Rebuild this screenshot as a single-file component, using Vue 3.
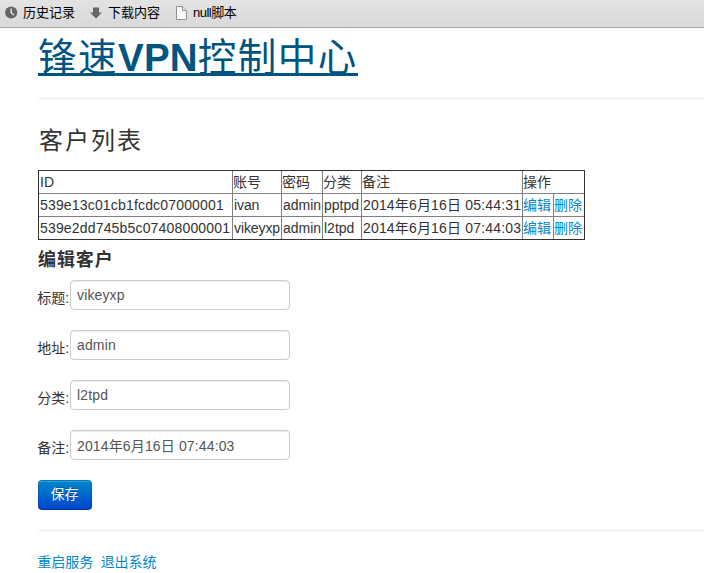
<script setup>
import { reactive } from 'vue'

const clients = [
  { id: '539e13c01cb1fcdc07000001', name: 'ivan', pass: 'admin', type: 'pptpd', note: '2014年6月16日 05:44:31' },
  { id: '539e2dd745b5c07408000001', name: 'vikeyxp', pass: 'admin', type: 'l2tpd', note: '2014年6月16日 07:44:03' },
]

const fields = reactive([
  { key: 'title', label: '标题:', value: 'vikeyxp' },
  { key: 'address', label: '地址:', value: 'admin' },
  { key: 'type', label: '分类:', value: 'l2tpd' },
  { key: 'note', label: '备注:', value: '2014年6月16日 07:44:03' },
])
</script>

<template>
  <div class="page">
    <nav class="bookmarks">
      <a class="bookmark history">
        <svg width="13" height="13" viewBox="0 0 13 13">
          <circle cx="6.2" cy="6.5" r="6.1" fill="#666" />
          <path d="M6.2 2.5V6.8L8.7 9" fill="none" stroke="#e8e8e8" stroke-width="1.4" />
        </svg>
        <span>历史记录</span>
      </a>
      <a class="bookmark downloads">
        <svg width="12" height="12" viewBox="0 0 12 12">
          <path d="M3 .5h6v5H12L6 11.5 0 5.5h3z" fill="#666" />
        </svg>
        <span>下载内容</span>
      </a>
      <a class="bookmark script">
        <svg width="11" height="14" viewBox="0 0 11 14">
          <path d="M.5 .5H6.5L10.5 4.5V13.5H.5z" fill="#fafafa" stroke="#929292" />
          <path d="M6.5 .5V4.5H10.5" fill="#e8e8e8" stroke="#929292" />
        </svg>
        <span>null脚本</span>
      </a>
    </nav>

    <main class="content">
      <h1><a><span class="cjk">锋速</span><b>VPN</b><span class="cjk">控制中心</span></a></h1>
      <hr>
      <h2>客户列表</h2>

      <table>
        <colgroup>
          <col class="c-id"><col class="c-name"><col class="c-pass"><col class="c-type">
          <col class="c-note"><col class="c-edit"><col class="c-del">
        </colgroup>
        <tbody>
          <tr class="head">
            <td>ID</td><td>账号</td><td>密码</td><td>分类</td><td>备注</td><td colspan="2">操作</td>
          </tr>
          <tr v-for="c in clients" :key="c.id">
            <td class="wide">{{ c.id }}</td>
            <td class="name">{{ c.name }}</td>
            <td>{{ c.pass }}</td>
            <td>{{ c.type }}</td>
            <td class="wide">{{ c.note }}</td>
            <td class="action"><a>编辑</a></td>
            <td class="action"><a>删除</a></td>
          </tr>
        </tbody>
      </table>

      <h3>编辑客户</h3>
      <form @submit.prevent>
        <div v-for="f in fields" :key="f.key" class="field">
          <label :for="f.key">{{ f.label }}</label>
          <input :id="f.key" v-model="f.value" type="text">
        </div>
        <button type="submit">保存</button>
      </form>
      <hr class="bottom">
      <footer><a>重启服务</a><a>退出系统</a></footer>
    </main>
  </div>
</template>

<style>
body {
  margin: 0;
  background: #fff;
  overflow: hidden;
}
</style>

<style scoped>
.page {
  height: 573px;
  overflow: hidden;
  font: 14px/20px "Liberation Sans", "Noto Sans CJK SC", sans-serif;
  color: #333;
}
.bookmarks {
  box-sizing: border-box;
  height: 28px;
  padding: 0 0 2px 5px;
  display: flex;
  align-items: center;
  background: linear-gradient(#e3e3e3, #d9d9d9);
  border-bottom: 1px solid #a9a9a9;
  font-size: 13px;
  color: #000;
}
.bookmark {
  display: flex;
  align-items: center;
  white-space: nowrap;
}
.history { width: 85px; gap: 5px; }
.downloads { width: 86px; gap: 6px; }
.script { gap: 6px; letter-spacing: -0.5px; }
.content {
  padding-left: 38px;
}
h1, h2, h3 {
  margin: 0;
  white-space: nowrap;
}
h1 {
  height: 70px;
  line-height: 60px;
  font-size: 38.5px;
  font-weight: 400;
  color: #005580;
}
h1 a {
  display: inline-block;
  height: 45px;
  border-bottom: 3px solid #005580;
}
h1 .cjk { letter-spacing: 1.5px; }
h1 b { letter-spacing: 0.2px; }
hr {
  margin: 0;
  border: 0;
  border-top: 1px solid #eee;
}
h2 {
  height: 71px;
  padding-left: 1px;
  line-height: 83px;
  font-size: 24px;
  font-weight: 400;
  letter-spacing: 2px;
}
table {
  width: 547px;
  height: 70px;
  table-layout: fixed;
  border: 1px solid #333;
  border-spacing: 0;
}
td {
  box-sizing: border-box;
  height: 23px;
  padding: 0 0 0 1px;
  border-right: 1px solid #808080;
  border-bottom: 1px solid #808080;
  white-space: nowrap;
}
td.wide { letter-spacing: 0.17px; }
td.name { letter-spacing: -0.1px; }
.head td + td,
td.action { padding-left: 0; }
td:last-child { border-right: 0; }
tr:last-child td { height: 22px; border-bottom: 0; }
.c-id { width: 194px; }
.c-name { width: 49px; }
.c-pass { width: 41px; }
.c-type { width: 39px; }
.c-note { width: 161px; }
.c-edit { width: 31px; }
.c-del { width: 30px; }
a { cursor: pointer; }
td a, footer a { color: #0088cc; }
h3 {
  height: 40px;
  line-height: 41px;
  font-size: 18px;
  font-weight: 700;
  letter-spacing: 0.9px;
}
.field {
  display: flex;
  height: 50px;
}
label {
  width: 32px;
  padding-top: 8px;
  text-indent: -0.7px;
}
input {
  box-sizing: border-box;
  width: 220px;
  height: 30px;
  padding: 4px 6px;
  font: inherit;
  letter-spacing: 0.14px;
  color: #555;
  background: #fff;
  border: 1px solid #ccc;
  border-radius: 4px;
  box-shadow: inset 0 1px 1px rgba(0, 0, 0, 0.075);
}
button {
  display: block;
  box-sizing: border-box;
  width: 54px;
  height: 30px;
  padding: 0 1px 2px 0;
  font: inherit;
  color: #fff;
  text-shadow: 0 -1px 0 rgba(0, 0, 0, 0.25);
  background: linear-gradient(#0088cc, #0044cc);
  background-origin: border-box;
  border: 1px solid;
  border-color: rgba(0, 0, 0, 0.1) rgba(0, 0, 0, 0.1) rgba(0, 0, 0, 0.25);
  border-radius: 4px;
  box-shadow: inset 0 1px 0 rgba(255, 255, 255, 0.2);
}
.bottom { margin-top: 20px; }
footer {
  display: flex;
  gap: 8px;
  padding-top: 21px;
  text-indent: -0.7px;
}
</style>
